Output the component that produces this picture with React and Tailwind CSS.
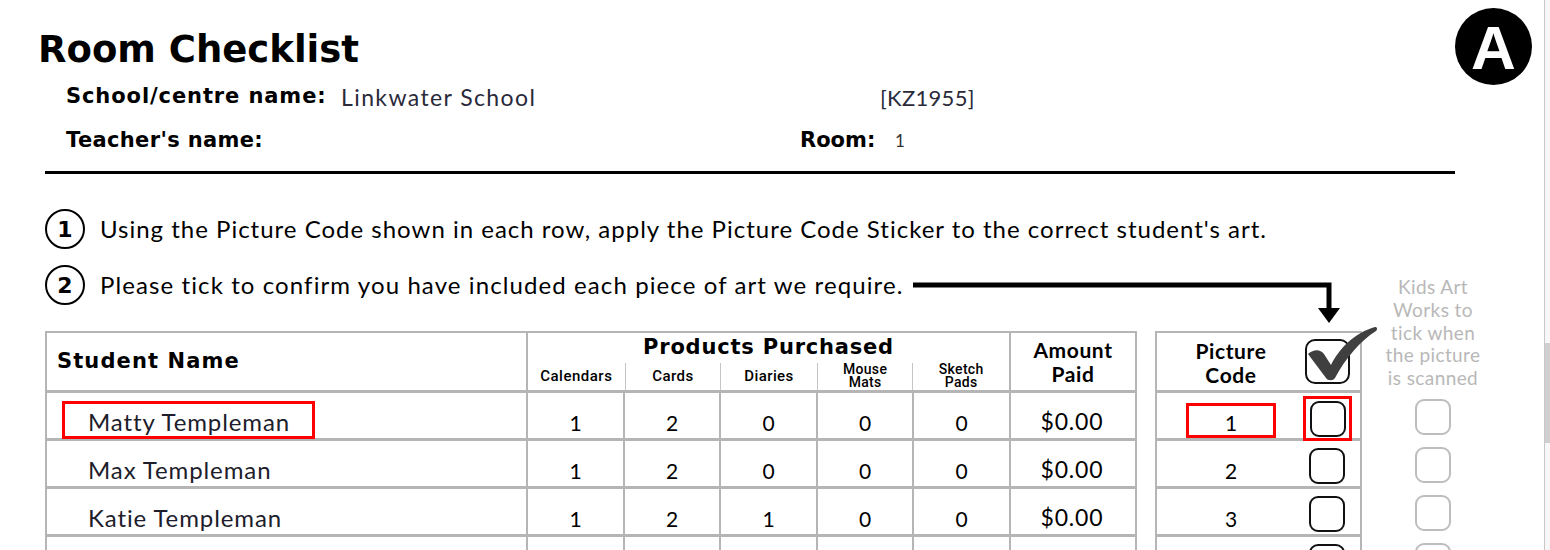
import React from "react";

const BODY = { fontFamily: '"Lato", "Open Sans", sans-serif' };
const HEAD = { fontFamily: '"DejaVu Sans", "Open Sans", sans-serif' };

const rows = [
  { name: "Matty Templeman", vals: ["1", "2", "0", "0", "0"], amt: "$0.00", code: "1", hl: true },
  { name: "Max Templeman", vals: ["1", "2", "0", "0", "0"], amt: "$0.00", code: "2" },
  { name: "Katie Templeman", vals: ["1", "2", "1", "0", "0"], amt: "$0.00", code: "3" },
  { name: "", vals: ["", "", "", "", ""], amt: "", code: "" },
];

const prodW = ["w-[97px]", "w-[96px]", "w-[97px]", "w-[96px]", "w-[97px]"];

function Checkbox({ gray }) {
  return (
    <div
      className={
        "w-[36px] h-[36px] rounded-[9px] border-2 " +
        (gray ? "border-[#bdbdbd]" : "border-[#111]")
      }
    />
  );
}

export default function App() {
  return (
    <div className="flex w-[1550px] h-[550px] overflow-hidden bg-white text-black" style={BODY}>
      <div className="relative w-[1544px] h-[550px]">
        {/* Badge */}
        <div
          className="absolute left-[1455px] top-[8px] w-[77px] h-[77px] rounded-full bg-black flex items-center justify-center text-white text-[62px] font-bold leading-none"
          style={{ fontFamily: '"Liberation Sans", Arial, sans-serif' }}
        >
          <span className="mt-[2px]">A</span>
        </div>

        {/* Arrow */}
        <svg className="absolute left-0 top-0" width="1544" height="340" viewBox="0 0 1544 340">
          <polyline points="913,285 1329,285 1329,310" fill="none" stroke="#000" strokeWidth="5" />
          <polygon points="1318,308 1340,308 1329,323" fill="#000" />
        </svg>

        {/* Title */}
        <div className="pt-[30px] pl-[38px]">
          <h1 className="text-[37px] leading-[40px] font-bold" style={HEAD}>
            Room Checklist
          </h1>
        </div>

        {/* Fields */}
        <div className="mt-[5px] pl-[66px]">
          <div className="flex h-[44px] items-center">
            <span className="w-[275px] text-[21px] font-bold tracking-[0.9px]" style={HEAD}>School/centre name:</span>
            <span className="w-[539px] text-[23px] tracking-[1.4px] text-[#2a2a3a]">Linkwater School</span>
            <span className="text-[22px] tracking-[0.3px] text-[#2a2a3a]">[KZ1955]</span>
          </div>
          <div className="flex h-[44px] items-center">
            <span className="w-[734px] text-[21px] font-bold tracking-[0.35px]" style={HEAD}>Teacher's name:</span>
            <span className="w-[95px] text-[21px] font-bold" style={HEAD}>Room:</span>
            <span className="text-[17px] text-[#333]">1</span>
          </div>
        </div>

        <div className="mt-[8px] ml-[45px] w-[1410px] h-[3px] bg-black" />

        {/* Steps */}
        <div className="mt-[27px] pl-[45px]">
          <div className="flex h-[56px] items-center gap-[15px]">
            <div className="w-[40px] h-[40px] rounded-full border-[2.5px] border-black flex items-center justify-center text-[22px] font-bold" style={HEAD}>1</div>
            <span className="text-[24px] tracking-[1px]">Using the Picture Code shown in each row, apply the Picture Code Sticker to the correct student's art.</span>
          </div>
          <div className="flex h-[56px] items-center gap-[15px]">
            <div className="w-[40px] h-[40px] rounded-full border-[2.5px] border-black flex items-center justify-center text-[22px] font-bold" style={HEAD}>2</div>
            <span className="text-[24px] tracking-[1.1px]">Please tick to confirm you have included each piece of art we require.</span>
          </div>
        </div>

        {/* Tables */}
        <div className="mt-[18px] ml-[45px] flex items-start">
          {/* Main table */}
          <div className="w-[1092px] border-2 border-[#b5b5b5]">
            <div className="flex h-[60px] border-b-[3px] border-[#b5b5b5]">
              <div className="w-[481px] border-r-2 border-[#b5b5b5] pl-[10px] pt-[13px]">
                <span className="text-[21px] font-bold tracking-[1.1px]" style={HEAD}>Student Name</span>
              </div>
              <div className="w-[483px] border-r-2 border-[#b5b5b5] flex flex-col">
                <div className="h-[33px] flex items-end justify-center text-[21px] font-bold leading-[26px] tracking-[0.8px]" style={HEAD}>
                  Products Purchased
                </div>
                <div className="flex flex-1 text-[15px] leading-[13px] font-medium" style={{ fontFamily: "Roboto, sans-serif" }}>
                  <div className="w-[97px] flex items-end justify-center pb-[7px] tracking-[0.5px]">Calendars</div>
                  <div className="w-[96px] flex items-end justify-center pb-[7px] border-l border-[#c4c4c4] mt-[3px] tracking-[0.4px]">Cards</div>
                  <div className="w-[97px] flex items-end justify-center pb-[7px] border-l border-[#c4c4c4] mt-[3px] tracking-[0.4px]">Diaries</div>
                  <div className="w-[96px] flex items-end justify-center text-center pb-[1px] border-l border-[#c4c4c4] mt-[3px] text-[14px] leading-[13px] tracking-[0.3px]">Mouse<br />Mats</div>
                  <div className="w-[97px] flex items-end justify-center text-center pb-[1px] border-l border-[#c4c4c4] mt-[3px] text-[14px] leading-[13px] tracking-[0.3px]">Sketch<br />Pads</div>
                </div>
              </div>
              <div className="w-[124px] flex flex-col items-center justify-center text-[21px] leading-[24px] font-bold tracking-[0.6px]">
                <span>Amount</span>
                <span>Paid</span>
              </div>
            </div>
            {rows.map((r, i) => (
              <div key={i} className="flex h-[48px] border-b-[3px] border-[#b5b5b5]">
                {r.hl ? (
                  <div className="w-[481px] border-r-2 border-[#b5b5b5] flex items-start pt-[8px] pl-[15px] text-[24px] tracking-[0.9px] text-[#1d1d2b]">
                    <span className="h-[38px] flex items-center border-[3px] border-[#ff0000] pl-[23px] pr-[22px] pt-[3px]">{r.name}</span>
                  </div>
                ) : (
                  <div className="w-[481px] border-r-2 border-[#b5b5b5] flex items-center pt-[12px] pl-[41px] text-[24px] tracking-[0.9px] text-[#1d1d2b]">
                    {r.name}
                  </div>
                )}
                {r.vals.map((v, j) => (
                  <div key={j} className={prodW[j] + " border-r-2 border-[#b5b5b5] flex items-center justify-center text-[21px] pt-[14px]"}>
                    {v}
                  </div>
                ))}
                <div className="w-[122px] flex items-center justify-center text-[23px] tracking-[0.8px] pt-[12px]">{r.amt}</div>
              </div>
            ))}
          </div>

          {/* Picture code table */}
          <div className="ml-[18px] w-[207px] border-2 border-[#b5b5b5]">
            <div className="flex h-[60px] border-b-[3px] border-[#b5b5b5]">
              <div className="w-[148px] flex flex-col items-center justify-center pt-[3px] text-[21px] leading-[24px] font-bold tracking-[0.6px]">
                <span>Picture</span>
                <span>Code</span>
              </div>
              <div className="relative flex items-center">
                <div className="w-[45px] h-[45px] rounded-[10px] border-2 border-[#111]" />
                <svg className="absolute left-[1px] top-[-8px]" width="72" height="58" viewBox="0 0 72 58">
                  <path d="M2 29 C8 24 14 24 18 29 L25 40 C33 24 48 8 69 2 C71 2 72 4 70 6 C54 16 39 34 29 53 C27 56 22 56 20 53 Z" fill="#3f3f3f" />
                </svg>
              </div>
            </div>
            {rows.map((r, i) => (
              <div key={i} className="flex h-[48px] border-b-[3px] border-[#b5b5b5]">
                {r.hl ? (
                  <div className="w-[148px] flex items-start justify-center pt-[10px] text-[21px]">
                    <span className="w-[90px] h-[35px] border-[3px] border-[#ff0000] flex items-center justify-center pt-[4px]">{r.code}</span>
                  </div>
                ) : (
                  <div className="w-[148px] flex items-center justify-center pt-[14px] text-[21px]">
                    {r.code}
                  </div>
                )}
                <div className="flex items-start">
                  {r.hl ? (
                    <div className="ml-[-2px] mt-[3px] w-[49px] h-[45px] border-[3px] border-[#ff0000] flex items-center justify-center">
                      <Checkbox />
                    </div>
                  ) : (
                    <div className="ml-[4px] mt-[7px]">
                      <Checkbox />
                    </div>
                  )}
                </div>
              </div>
            ))}
          </div>

          {/* Scan column */}
          <div className="-mt-[55px] ml-[16px] w-[110px] flex flex-col items-center">
            <div className="h-[117px] text-center text-[19px] leading-[22.75px] tracking-[0.4px] text-[#b8b8b8]">
              Kids Art<br />Works to<br />tick when<br />the picture<br />is scanned
            </div>
            {rows.map((r, i) => (
              <div key={i} className="h-[48px] flex items-center">
                <Checkbox gray />
              </div>
            ))}
          </div>
        </div>
      </div>

      {/* Scrollbar */}
      <div className="w-[6px] h-[550px] border-l border-[#c8c8c8] bg-[#f7f7f7] flex flex-col">
        <div className="mt-[343px] h-[100px] bg-[#cfcfcf]" />
      </div>
    </div>
  );
}
